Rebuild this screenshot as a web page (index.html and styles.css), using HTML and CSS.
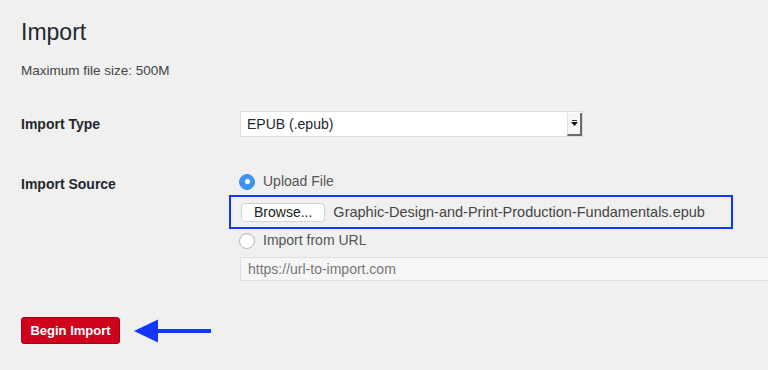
FILE: index.html
```html
<!DOCTYPE html>
<html lang="en">
<head>
<meta charset="utf-8">
<title>Import</title>
<link rel="stylesheet" href="styles.css">
</head>
<body>
<div class="wrap">
  <h1 class="title">Import</h1>
  <p class="note">Maximum file size: 500M</p>
  <div class="form">
    <div class="label label-type">Import Type</div>
    <div class="control">
      <div class="select">
        <span class="select-value">EPUB (.epub)</span>
        <span class="select-btn">
          <svg class="select-arrow" width="7" height="7" viewBox="0 0 7 7"><rect x="1" y="0" width="5" height="1" fill="#333"/><polygon points="0,2 7,2 3.5,6" fill="#111"/></svg>
        </span>
      </div>
    </div>
    <div class="label label-source">Import Source</div>
    <div class="control source">
      <div class="radio-row"><span class="radio checked"></span><span>Upload File</span></div>
      <div class="file-box">
        <span class="browse">Browse...</span>
        <span class="filename">Graphic-Design-and-Print-Production-Fundamentals.epub</span>
      </div>
      <div class="radio-row second"><span class="radio"></span><span>Import from URL</span></div>
      <div class="url-input">https://url-to-import.com</div>
    </div>
  </div>
  <div class="actions">
    <span class="btn">Begin Import</span>
    <svg class="pointer" width="77" height="24" viewBox="0 0 77 24">
      <polygon points="0,12 24,0.5 24,23.5" fill="#1236ff"/>
      <rect x="22" y="10" width="55" height="4" fill="#1236ff"/>
    </svg>
  </div>
</div>
</body>
</html>
```

FILE: styles.css
```css
html, body {
  margin: 0;
  padding: 0;
}
body {
  background: #f0f0f0;
  font-family: "Liberation Sans", Arial, Helvetica, sans-serif;
  color: #23282d;
  width: 768px;
  height: 370px;
  overflow: hidden;
}
.wrap {
  padding: 17px 0 0 21px;
}
.title {
  margin: 0;
  font-size: 23px;
  font-weight: 400;
  line-height: 30px;
  color: #23282d;
}
.note {
  margin: 14px 0 0;
  font-size: 13.5px;
  line-height: 20px;
  color: #444;
}
.form {
  display: grid;
  grid-template-columns: 219px 1fr;
  row-gap: 36px;
  margin-top: 30px;
}
.label {
  font-size: 14px;
  font-weight: 700;
  line-height: 20px;
  color: #23282d;
}
.label-type {
  align-self: center;
}
.label-source {
  align-self: start;
  margin-top: 1px;
}
.select {
  display: flex;
  width: 343px;
  height: 26px;
  box-sizing: border-box;
  background: #fff;
  border: 1px solid #dcdcdc;
}
.select-value {
  flex: 1;
  padding-left: 6px;
  font-size: 14px;
  line-height: 24px;
  color: #23282d;
}
.select-btn {
  width: 15px;
  margin-top: 1px;
  box-sizing: border-box;
  background: #f6f6f6;
  border-left: 1px solid #e2e2e2;
  border-right: 2px solid #6a6a6a;
  border-bottom: 2px solid #6a6a6a;
  display: flex;
  align-items: center;
  justify-content: center;
}
.select-arrow {
  display: block;
  margin-top: -1px;
}
.source {
  display: flex;
  flex-direction: column;
}
.radio-row {
  display: flex;
  align-items: center;
  gap: 8px;
  height: 17px;
  margin-left: -1px;
  font-size: 14px;
  line-height: 17px;
  color: #555;
}
.radio-row.second {
  margin-top: 3px;
}
.radio {
  width: 16px;
  height: 16px;
  box-sizing: border-box;
  border-radius: 50%;
  background: #fff;
  border: 1px solid #b9b9b9;
  box-shadow: inset 0 1px 2px rgba(0, 0, 0, 0.08);
  flex: none;
}
.radio.checked {
  background: #3d95f7;
  border-color: #3a8eee;
  box-shadow: none;
  position: relative;
}
.radio.checked::after {
  content: "";
  position: absolute;
  left: 4.5px;
  top: 4.5px;
  width: 5px;
  height: 5px;
  border-radius: 50%;
  background: #fff;
}
.file-box {
  margin-top: 5px;
  margin-left: -11px;
  width: 504px;
  height: 34px;
  box-sizing: border-box;
  border: 2px solid #1236ff;
  display: flex;
  align-items: center;
  gap: 8px;
  padding-left: 10px;
}
.browse {
  height: 19px;
  box-sizing: border-box;
  padding: 0 12px;
  background: #fff;
  border: 1px solid #d2d2d2;
  border-radius: 4px;
  font-size: 14px;
  line-height: 17px;
  color: #222;
}
.filename {
  font-size: 14.5px;
  line-height: 17px;
  color: #444;
  white-space: nowrap;
}
.url-input {
  margin-top: 8px;
  width: 560px;
  height: 24px;
  box-sizing: border-box;
  background: #f6f6f6;
  border: 1px solid #dedede;
  padding-left: 7px;
  font-size: 14px;
  line-height: 22px;
  color: #777;
}
.actions {
  display: flex;
  align-items: center;
  margin-top: 36px;
}
.btn {
  width: 99px;
  height: 27px;
  box-sizing: border-box;
  background: #d0021b;
  border: 1px solid #a9001a;
  border-radius: 3px;
  color: #fff;
  font-size: 13px;
  font-weight: 700;
  display: flex;
  align-items: center;
  justify-content: center;
}
.pointer {
  display: block;
  margin-left: 14px;
}
```
